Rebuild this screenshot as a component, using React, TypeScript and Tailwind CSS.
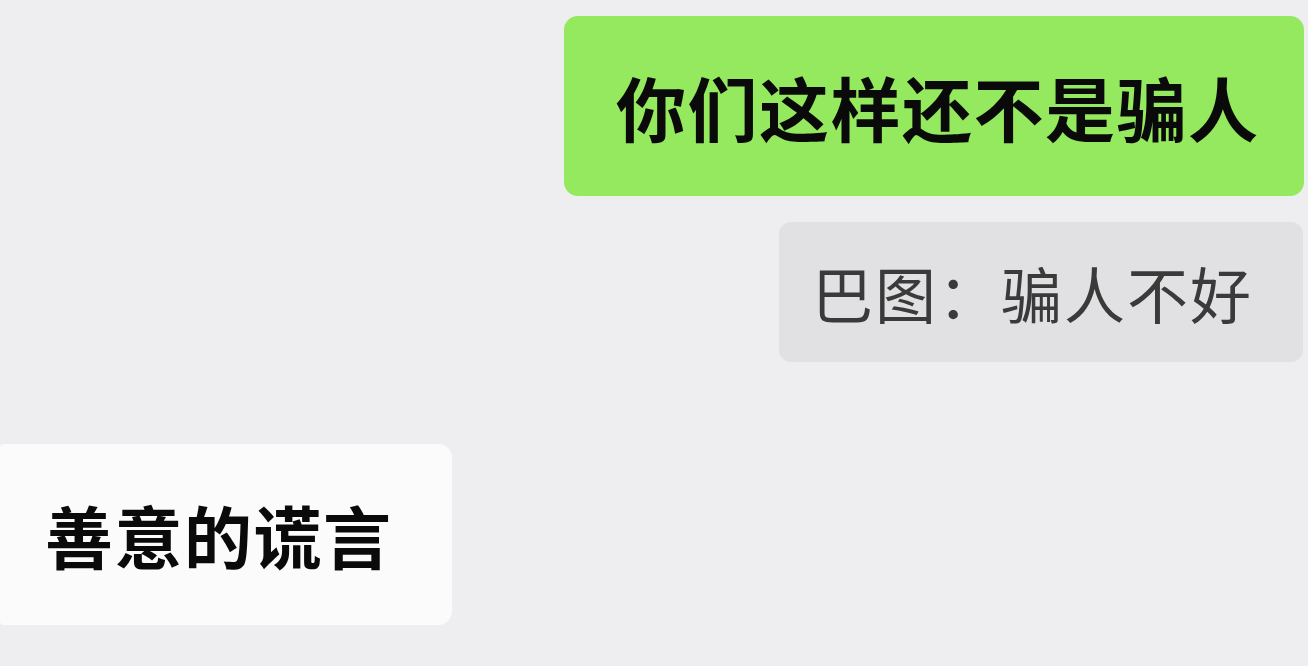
export default function App() {
  const font = { fontFamily: '"Noto Sans CJK SC", "Noto Sans", sans-serif' };
  return (
    <div className="w-[1308px] h-[666px] bg-[#eeeef0] flex flex-col overflow-hidden" style={font}>
      <div className="flex justify-end pr-[4px] pt-[16px]">
        <div className="w-[740px] h-[180px] rounded-[14px] bg-[#94e95f] flex items-center pl-[52px]">
          <span className="text-[70px] leading-none font-bold text-[#0a0a0a] tracking-[1.5px] translate-y-[1px]">你们这样还不是骗人</span>
        </div>
      </div>
      <div className="flex justify-end pr-[5px] pt-[26px]">
        <div className="w-[524px] h-[140px] rounded-[12px] bg-[#e1e1e3] flex items-center pl-[33px]">
          <span className="text-[61px] leading-none text-[#3a3a3a] tracking-[2px]">巴图：骗人不好</span>
        </div>
      </div>
      <div className="flex justify-start pt-[82px]">
        <div className="w-[452px] h-[181px] rounded-r-[14px] rounded-l-[4px] bg-[#fbfbfc] flex items-center pl-[45px]">
          <span className="text-[68px] leading-none font-bold text-[#0a0a0a] tracking-[1.5px]">善意的谎言</span>
        </div>
      </div>
    </div>
  );
}
